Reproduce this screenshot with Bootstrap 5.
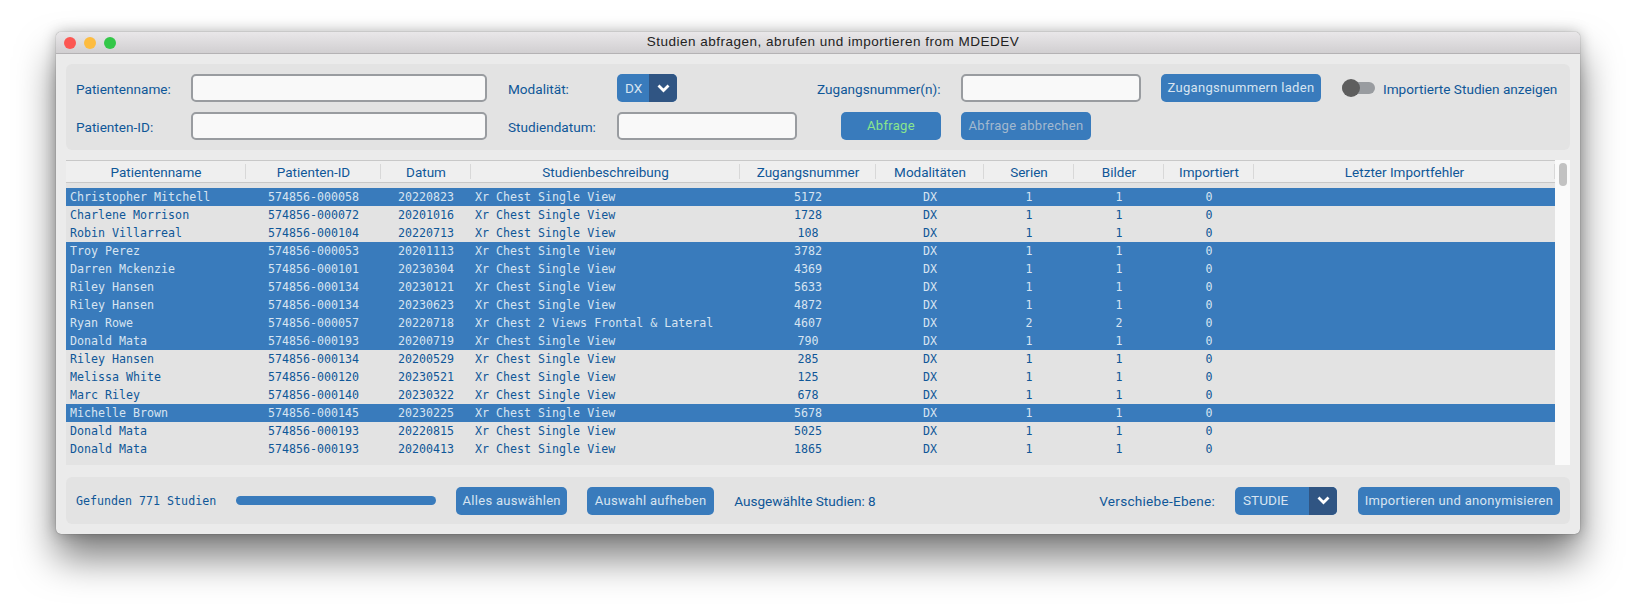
<!DOCTYPE html>
<html lang="de">

<head>
    <meta charset="UTF-8" />
    <title>Studien abfragen</title>
    <link href="https://cdn.jsdelivr.net/npm/bootstrap@5.3.2/dist/css/bootstrap.min.css" rel="stylesheet" />
    <style>
        body {
            background: #fff;
            padding: 32px 56px 0;
            font-family: Roboto, "Liberation Sans", sans-serif;
            font-size: 13.6px;
            color: #0f5798;
            height: 614px;
            overflow: hidden;
        }

        .app-window {
            width: 1524px;
            height: 502px;
            background: #ebebeb;
            border-radius: 5px;
            box-shadow: 0 24px 38px rgba(0, 0, 0, 0.5), 0 0 14px rgba(0, 0, 0, 0.25), 0 0 1px rgba(0, 0, 0, 0.6);
        }

        .title-bar {
            height: 22px;
            background: linear-gradient(#e9e7e9, #d1cfd1);
            border-bottom: 1px solid #b4b2b4;
            border-radius: 5px 5px 0 0;
            font-family: "Liberation Sans", sans-serif;
            font-size: 13.5px;
            letter-spacing: 0.5px;
            color: #222;
        }

        .traffic {
            width: 12px;
            height: 12px;
            border-radius: 50%;
        }

        .title-text {
            flex: 1;
            text-align: center;
            margin-right: 30px;
        }

        .app-body {
            padding: 10px 10px 9px;
        }

        .panel-box {
            background: #e3e3e3;
            border-radius: 6px;
        }

        .query-grid {
            display: grid;
            grid-template-columns: 115px 296px 21px 109px 180px 20px 144px 180px 20px 160px 21px 1fr;
            grid-template-rows: 28px 28px;
            row-gap: 10px;
            padding: 10px;
            align-items: center;
        }

        .field-label {
            padding-top: 3px;
        }

        .field-in.form-control {
            height: 28px;
            min-height: 0;
            padding: 0 6px;
            background: #f9f9f9;
            border: 2px solid #999ca0;
            border-radius: 5px;
        }

        .blue-btn.btn {
            height: 28px;
            padding: 0;
            background: #397bbc;
            border: 0;
            border-radius: 5px;
            color: #d7e4f1;
            font-size: 13px;
            letter-spacing: 0.3px;
        }

        .blue-btn.go {
            color: #8ae68c;
        }

        .blue-btn.off {
            color: #a3b9cf;
        }

        .combo-box {
            height: 28px;
            background: #397bbc;
            border-radius: 5px;
            overflow: hidden;
            color: #d7e4f1;
        }

        .combo-arrow {
            width: 28px;
            background: #305583;
        }

        .switch-track {
            width: 33px;
            height: 12px;
            background: #999ca0;
            border-radius: 6px;
        }

        .switch-knob {
            width: 18px;
            height: 18px;
            background: #5e5e5e;
            border-radius: 50%;
        }

        .table-wrap {
            margin-top: 10px;
            height: 305px;
        }

        .table-area {
            width: 1489px;
            background: #e3e3e3;
        }

        .study-table {
            table-layout: fixed;
            width: 1489px;
            margin: 0;
            font-family: "DejaVu Sans Mono", monospace;
            font-size: 11.65px;
        }

        .study-table th {
            position: relative;
            height: 22px;
            padding: 0;
            background: #efefef;
            color: #0f5798;
            font-family: Roboto, sans-serif;
            font-size: 13.5px;
            font-weight: 400;
            text-align: center;
            border-top: 1px solid #c8c8c8;
            border-bottom: 1px solid #c8c8c8;
        }

        .study-table th::after {
            content: "";
            position: absolute;
            right: 0;
            top: 3px;
            bottom: 3px;
            width: 1px;
            background: #d8d8d8;
        }

        .study-table tbody::before {
            content: "";
            display: table-row;
            height: 5px;
        }

        .study-table td {
            height: 18px;
            padding: 0;
            line-height: 18px;
            background: transparent;
            color: #0f5798;
            text-align: center;
            white-space: nowrap;
        }

        .study-table td.txt-left {
            text-align: left;
            padding-left: 4px;
        }

        .study-table tr.sel td {
            background: #397bbc;
            color: #d7e4f1;
        }

        .scroll-rail {
            width: 15px;
            background: #fafafa;
            padding: 3px 3px 0 4px;
        }

        .scroll-thumb {
            height: 23px;
            background: #c2c2c2;
            border-radius: 4px;
        }

        .foot-box {
            margin-top: 12px;
            height: 47px;
            padding: 0 10px;
        }

        .foot-txt {
            padding-top: 2px;
        }

        .spaced-txt {
            letter-spacing: 0.25px;
        }

        .mono-txt {
            font-family: "DejaVu Sans Mono", monospace;
            font-size: 11.65px;
        }

        .bar-track.progress {
            width: 200px;
            height: 9px;
            margin-left: 20px;
            background: #e3e3e3;
            border-radius: 5px;
        }

        .bar-track .progress-bar {
            background: #397bbc;
        }
    </style>
</head>

<body>
    <div class="app-window">
        <div class="title-bar d-flex align-items-center">
            <div class="d-flex gap-2 ps-2">
                <span class="traffic" style="background:#fc5753"></span>
                <span class="traffic" style="background:#fdbc40"></span>
                <span class="traffic" style="background:#33c748"></span>
            </div>
            <div class="title-text">Studien abfragen, abrufen und importieren from MDEDEV</div>
        </div>
        <div class="app-body">
            <div class="panel-box query-grid">
                <div class="field-label">Patientenname:</div>
                <input class="form-control field-in" type="text" />
                <div></div>
                <div class="field-label">Modalität:</div>
                <div class="combo-box d-flex" style="width:60px">
                    <div class="flex-grow-1 d-flex align-items-center ps-2">DX</div>
                    <div class="combo-arrow d-flex align-items-center justify-content-center">
                        <svg width="13" height="9" viewBox="0 0 13 9"><polyline points="1.5,1.5 6.5,6.5 11.5,1.5" fill="none" stroke="#fff" stroke-width="2.8" /></svg>
                    </div>
                </div>
                <div></div>
                <div class="field-label">Zugangsnummer(n):</div>
                <input class="form-control field-in" type="text" />
                <div></div>
                <button class="btn blue-btn">Zugangsnummern laden</button>
                <div></div>
                <div class="d-flex align-items-center">
                    <div class="switch-track d-flex align-items-center flex-shrink-0"><div class="switch-knob"></div></div>
                    <span class="ms-2 field-label text-nowrap">Importierte Studien anzeigen</span>
                </div>

                <div class="field-label">Patienten-ID:</div>
                <input class="form-control field-in" type="text" />
                <div></div>
                <div class="field-label">Studiendatum:</div>
                <input class="form-control field-in" type="text" />
                <div></div>
                <div><button class="btn blue-btn go ms-4" style="width:100px">Abfrage</button></div>
                <div><button class="btn blue-btn off" style="width:130px">Abfrage abbrechen</button></div>
            </div>

            <div class="table-wrap d-flex">
                <div class="table-area">
                    <table class="table table-borderless study-table">
                        <colgroup>
                            <col style="width:180px"><col style="width:135px"><col style="width:90px"><col style="width:269px"><col style="width:136px"><col style="width:108px"><col style="width:90px"><col style="width:90px"><col style="width:90px"><col>
                        </colgroup>
                        <thead>
                            <tr>
                                <th>Patientenname</th><th>Patienten-ID</th><th>Datum</th><th>Studienbeschreibung</th><th>Zugangsnummer</th><th>Modalitäten</th><th>Serien</th><th>Bilder</th><th>Importiert</th><th>Letzter Importfehler</th>
                            </tr>
                        </thead>
                        <tbody id="studyRows"></tbody>
                    </table>
                </div>
                <div class="scroll-rail"><div class="scroll-thumb"></div></div>
            </div>

            <div class="panel-box foot-box d-flex align-items-center">
                <span class="mono-txt foot-txt">Gefunden 771 Studien</span>
                <div class="progress bar-track"><div class="progress-bar" style="width:100%"></div></div>
                <button class="btn blue-btn" style="width:111px;margin-left:20px">Alles auswählen</button>
                <button class="btn blue-btn" style="width:127px;margin-left:20px">Auswahl aufheben</button>
                <span class="foot-txt" style="margin-left:20px">Ausgewählte Studien: 8</span>
                <span class="ms-auto foot-txt spaced-txt">Verschiebe-Ebene:</span>
                <div class="combo-box d-flex" style="width:102px;margin-left:20px">
                    <div class="flex-grow-1 d-flex align-items-center ps-2">STUDIE</div>
                    <div class="combo-arrow d-flex align-items-center justify-content-center">
                        <svg width="13" height="9" viewBox="0 0 13 9"><polyline points="1.5,1.5 6.5,6.5 11.5,1.5" fill="none" stroke="#fff" stroke-width="2.8" /></svg>
                    </div>
                </div>
                <button class="btn blue-btn" style="width:202px;margin-left:21px">Importieren und anonymisieren</button>
            </div>
        </div>
    </div>

    <script src="https://cdn.jsdelivr.net/npm/bootstrap@5.3.2/dist/js/bootstrap.bundle.min.js"></script>
    <script>
        const single = 'Xr Chest Single View';
        const studies = [
            ['Christopher Mitchell', '000058', '20220823', single, '5172', 1, true],
            ['Charlene Morrison', '000072', '20201016', single, '1728', 1, false],
            ['Robin Villarreal', '000104', '20220713', single, '108', 1, false],
            ['Troy Perez', '000053', '20201113', single, '3782', 1, true],
            ['Darren Mckenzie', '000101', '20230304', single, '4369', 1, true],
            ['Riley Hansen', '000134', '20230121', single, '5633', 1, true],
            ['Riley Hansen', '000134', '20230623', single, '4872', 1, true],
            ['Ryan Rowe', '000057', '20220718', 'Xr Chest 2 Views Frontal &amp; Lateral', '4607', 2, true],
            ['Donald Mata', '000193', '20200719', single, '790', 1, true],
            ['Riley Hansen', '000134', '20200529', single, '285', 1, false],
            ['Melissa White', '000120', '20230521', single, '125', 1, false],
            ['Marc Riley', '000140', '20230322', single, '678', 1, false],
            ['Michelle Brown', '000145', '20230225', single, '5678', 1, true],
            ['Donald Mata', '000193', '20220815', single, '5025', 1, false],
            ['Donald Mata', '000193', '20200413', single, '1865', 1, false]
        ];

        document.getElementById('studyRows').innerHTML = studies.map(s =>
            '<tr class="' + (s[6] ? 'sel' : '') + '">' +
            '<td class="txt-left">' + s[0] + '</td>' +
            '<td>574856-' + s[1] + '</td>' +
            '<td>' + s[2] + '</td>' +
            '<td class="txt-left">' + s[3] + '</td>' +
            '<td>' + s[4] + '</td>' +
            '<td>DX</td>' +
            '<td>' + s[5] + '</td>' +
            '<td>' + s[5] + '</td>' +
            '<td>0</td>' +
            '<td></td>' +
            '</tr>'
        ).join('');
    </script>
</body>

</html>
